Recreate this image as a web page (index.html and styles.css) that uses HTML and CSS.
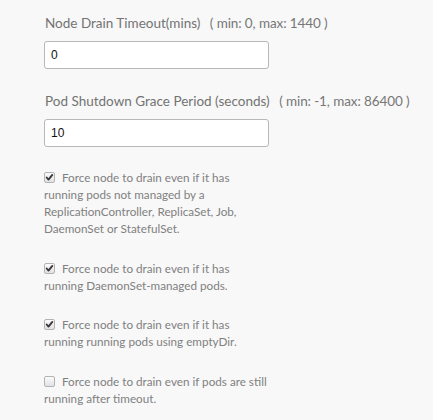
FILE: index.html
```html
<!DOCTYPE html>
<html>
<head>
<meta charset="utf-8">
<link rel="stylesheet" href="styles.css">
</head>
<body>
<div class="form">
  <div class="field">
    <div class="label">Node Drain Timeout(mins) <span class="hint">( min: 0, max: 1440 )</span></div>
    <input class="input" type="text" value="0">
  </div>
  <div class="field">
    <div class="label">Pod Shutdown Grace Period (seconds) <span class="hint">( min: -1, max: 86400 )</span></div>
    <input class="input" type="text" value="10">
  </div>
  <label class="check">
    <span class="box checked"><svg viewBox="0 0 11 11" width="11" height="11"><path d="M2.7 5.5 L4.5 7.6 L8.3 2.9" fill="none" stroke="#3a3a3a" stroke-width="1.9" stroke-linecap="round" stroke-linejoin="round"/></svg></span>
    Force node to drain even if it has running pods not managed by a ReplicationController, ReplicaSet, Job, DaemonSet or StatefulSet.
  </label>
  <label class="check">
    <span class="box checked"><svg viewBox="0 0 11 11" width="11" height="11"><path d="M2.7 5.5 L4.5 7.6 L8.3 2.9" fill="none" stroke="#3a3a3a" stroke-width="1.9" stroke-linecap="round" stroke-linejoin="round"/></svg></span>
    Force node to drain even if it has running DaemonSet-managed pods.
  </label>
  <label class="check">
    <span class="box checked"><svg viewBox="0 0 11 11" width="11" height="11"><path d="M2.7 5.5 L4.5 7.6 L8.3 2.9" fill="none" stroke="#3a3a3a" stroke-width="1.9" stroke-linecap="round" stroke-linejoin="round"/></svg></span>
    Force node to drain even if it has running running pods using emptyDir.
  </label>
  <label class="check">
    <span class="box"></span>
    Force node to drain even if pods are still running after timeout.
  </label>
</div>
</body>
</html>
```
FILE: styles.css
```css
html, body {
  margin: 0;
  padding: 0;
  background: #f8f8f8;
}
.form {
  padding: 13px 0 0 44px;
  font-family: Lato, "Open Sans", sans-serif;
  color: #737373;
}
.field {
  margin-bottom: 22px;
}
.label {
  font-size: 13.5px;
  line-height: 20px;
  margin-bottom: 8px;
  padding-left: 1px;
  white-space: nowrap;
}
.hint {
  margin-left: 6px;
  color: #777;
  letter-spacing: -0.1px;
}
.input {
  display: block;
  box-sizing: border-box;
  width: 225px;
  height: 28px;
  margin: 0;
  padding: 0 6px;
  border: 1px solid #b8b8b8;
  border-radius: 3px;
  background: #fff;
  font-family: "Liberation Sans", Arial, sans-serif;
  font-size: 12px;
  color: #111;
  outline: none;
}
.check {
  display: block;
  width: 227px;
  font-size: 11.7px;
  line-height: 17px;
  color: #808080;
  margin-bottom: 22.5px;
}
.box {
  display: inline-block;
  box-sizing: border-box;
  width: 11px;
  height: 11px;
  border: 1px solid #b3b3b3;
  border-radius: 2px;
  background: linear-gradient(#fbfbfb, #e2e2e2);
  vertical-align: -1px;
  margin-right: 4px;
  position: relative;
}
.box svg {
  position: absolute;
  left: -1px;
  top: -1px;
}
```
